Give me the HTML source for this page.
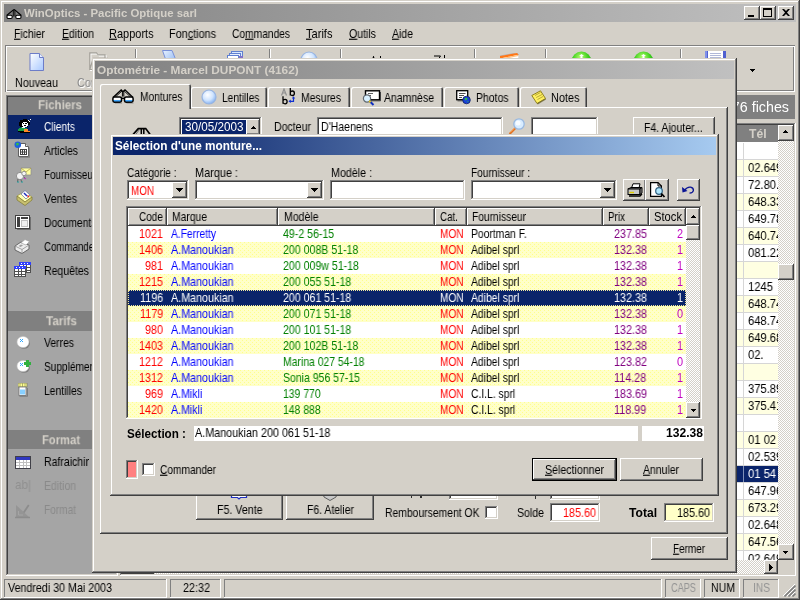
<!DOCTYPE html>
<html><head><meta charset="utf-8"><title>WinOptics</title>
<style>
html,body{margin:0;padding:0;}
body{width:800px;height:600px;overflow:hidden;background:#d4d0c8;position:relative;font-family:"Liberation Sans",sans-serif;font-size:11px;}
body div{position:absolute;box-sizing:border-box;}
.t{position:absolute;white-space:nowrap;transform-origin:0 50%;display:inline-block;will-change:transform;}
.yel{background-color:#ffffc9;background-image:radial-gradient(circle at .5px .5px,#ffff8c .55px,transparent .75px),radial-gradient(circle at 2.5px 2.5px,#ffff8c .55px,transparent .75px);background-size:4px 4px;}
.dither{background-color:#fff;background-image:linear-gradient(45deg,#d4d0c8 25%,transparent 25%,transparent 75%,#d4d0c8 75%),linear-gradient(45deg,#d4d0c8 25%,transparent 25%,transparent 75%,#d4d0c8 75%);background-size:2px 2px;background-position:0 0,1px 1px;}
svg{position:absolute;}
</style></head><body>
<div style="left:0px;top:0px;width:800px;height:600px;background:#d4d0c8;box-shadow:inset -1px -1px #404040,inset 1px 1px #d4d0c8,inset -2px -2px #808080,inset 2px 2px #fff;"></div>
<div style="left:4px;top:4px;width:792px;height:18px;background:linear-gradient(90deg,#808080 0%,#c0c0c0 100%);"></div>
<svg style="left:6px;top:9px" width="16" height="11" viewBox="0 0 16 11"><path d="M.6 6.5 L7.4 .8 M15.4 6.5 L8.8 .8 M7.4 .6 H8.8" stroke="#000" stroke-width="1.1" fill="none"/><path d="M7.3 1 V7.5 M8.9 1 V7.5" stroke="#000" stroke-width=".9"/><rect x="1" y="6.3" width="5.2" height="3.2" rx="1.2" fill="#fff" stroke="#000" stroke-width="1.1"/><rect x="9.8" y="6.3" width="5.2" height="3.2" rx="1.2" fill="#fff" stroke="#000" stroke-width="1.1"/></svg>
<span class="t" style="left:24.00px;top:4.70px;font-size:11px;line-height:16px;color:#d4d0c8;font-weight:bold;transform:scale(1.0374,1.02);">WinOptics - Pacific Optique sarl</span>
<div style="left:744px;top:6px;width:16px;height:14px;background:#d4d0c8;box-shadow:inset -1px -1px #404040,inset 1px 1px #fff,inset -2px -2px #808080,inset 2px 2px #d4d0c8;"></div>
<div style="left:760px;top:6px;width:16px;height:14px;background:#d4d0c8;box-shadow:inset -1px -1px #404040,inset 1px 1px #fff,inset -2px -2px #808080,inset 2px 2px #d4d0c8;"></div>
<div style="left:778px;top:6px;width:16px;height:14px;background:#d4d0c8;box-shadow:inset -1px -1px #404040,inset 1px 1px #fff,inset -2px -2px #808080,inset 2px 2px #d4d0c8;"></div>
<div style="left:748px;top:15px;width:6px;height:2px;background:#000;"></div>
<div style="left:763px;top:8px;width:9px;height:9px;border:1px solid #000;border-top-width:2px;"></div>
<svg style="left:782px;top:9px" width="8" height="7" viewBox="0 0 8 7"><path d="M0 0h2l2 2 2-2h2L5 3.5 8 7H6L4 5 2 7H0l3-3.5z" fill="#000"/></svg>
<span class="t" style="left:14px;top:25.2px;font-size:11px;line-height:16px;transform:scale(0.9393,1.13)"><u>F</u>ichier</span>
<span class="t" style="left:61.5px;top:25.2px;font-size:11px;line-height:16px;transform:scale(0.9515,1.13)"><u>E</u>dition</span>
<span class="t" style="left:109px;top:25.2px;font-size:11px;line-height:16px;transform:scale(0.9971,1.13)"><u>R</u>apports</span>
<span class="t" style="left:169px;top:25.2px;font-size:11px;line-height:16px;transform:scale(0.9856,1.13)">Fon<u>c</u>tions</span>
<span class="t" style="left:231.5px;top:25.2px;font-size:11px;line-height:16px;transform:scale(0.9302,1.13)">Co<u>m</u>mandes</span>
<span class="t" style="left:306px;top:25.2px;font-size:11px;line-height:16px;transform:scale(1.0084,1.13)"><u>T</u>arifs</span>
<span class="t" style="left:348.5px;top:25.2px;font-size:11px;line-height:16px;transform:scale(0.9603,1.13)"><u>O</u>utils</span>
<span class="t" style="left:391.5px;top:25.2px;font-size:11px;line-height:16px;transform:scale(0.9539,1.13)"><u>A</u>ide</span>
<div style="left:5px;top:45px;width:790px;height:47px;box-shadow:inset 1px 1px #808080,inset -1px -1px #fff,inset 2px 2px #fff,inset -2px -2px #808080;"></div>
<div style="left:135px;top:49px;width:1px;height:38px;background:#808080;"></div>
<div style="left:136px;top:49px;width:1px;height:38px;background:#fff;"></div>
<div style="left:269px;top:49px;width:1px;height:38px;background:#808080;"></div>
<div style="left:270px;top:49px;width:1px;height:38px;background:#fff;"></div>
<div style="left:340px;top:49px;width:1px;height:38px;background:#808080;"></div>
<div style="left:341px;top:49px;width:1px;height:38px;background:#fff;"></div>
<div style="left:474px;top:49px;width:1px;height:38px;background:#808080;"></div>
<div style="left:475px;top:49px;width:1px;height:38px;background:#fff;"></div>
<div style="left:545px;top:49px;width:1px;height:38px;background:#808080;"></div>
<div style="left:546px;top:49px;width:1px;height:38px;background:#fff;"></div>
<div style="left:680px;top:49px;width:1px;height:38px;background:#808080;"></div>
<div style="left:681px;top:49px;width:1px;height:38px;background:#fff;"></div>
<svg style="left:28.5px;top:52.5px" width="16" height="18" viewBox="0 0 16 18"><defs><linearGradient id="dn" x1="0" y1="0" x2="1" y2="1"><stop offset="0" stop-color="#fff"/><stop offset="1" stop-color="#a8c8ff"/></linearGradient></defs><path d="M1 .5 H10.5 L14.5 4.5 V17.5 H1 Z" fill="url(#dn)" stroke="#6c7cc8" stroke-width="1"/><path d="M10.5 .5 V4.5 H14.5" fill="#e8f0ff" stroke="#6c7cc8" stroke-width="1"/></svg>
<svg style="left:89px;top:51.5px" width="20" height="20" viewBox="0 0 20 20"><g transform="translate(1,1)"><path d="M.8 17.5 V.8 H7.5 L9.3 2.8 H16 V6.3 M.8 17.5 L4.2 6.3 H18.2 L15 17.5 Z" fill="none" stroke="#fff" stroke-width="1.2"/></g><path d="M.8 17.5 L4.2 6.3 H18.2 L15 17.5 Z" fill="#dcd9d2"/><path d="M.8 17.5 V.8 H7.5 L9.3 2.8 H16 V6.3 M.8 17.5 L4.2 6.3 H18.2 L15 17.5 Z" fill="none" stroke="#a4a19a" stroke-width="1.2"/></svg>
<svg style="left:162px;top:50px" width="14" height="17" viewBox="0 0 14 17"><defs><linearGradient id="ds" x1="0" y1="0" x2="1" y2="1"><stop offset="0" stop-color="#e8f2ff"/><stop offset="1" stop-color="#88b0f0"/></linearGradient></defs><path d="M.5 .5 H10 L13.5 9 V16 H3.5 V9 Z" fill="url(#ds)" stroke="#7890d8" stroke-width="1"/></svg>
<svg style="left:227px;top:51px" width="17" height="17" viewBox="0 0 17 17"><rect x="4.5" y=".5" width="11" height="11" fill="#d8e8ff" stroke="#6080d0"/><rect x="2.5" y="2.5" width="11" height="11" fill="#e8f0ff" stroke="#6080d0"/><rect x=".5" y="4.5" width="11" height="11" fill="#fff" stroke="#6080d0"/><rect x="12" y="5" width="4" height="10" fill="#8070c8"/></svg>
<svg style="left:299.5px;top:51px" width="18" height="18" viewBox="0 0 18 18"><defs><radialGradient id="tl" cx=".4" cy=".35" r=".7"><stop offset="0" stop-color="#fff"/><stop offset=".55" stop-color="#cfe4ff"/><stop offset="1" stop-color="#7cacf0"/></radialGradient></defs><circle cx="9" cy="9" r="8" fill="url(#tl)" stroke="#98b4e0" stroke-width="1.2"/></svg>
<svg style="left:370px;top:55.5px" width="14" height="14" viewBox="0 0 14 14"><path d="M0 11 L3.5 1 L7 11 M1.5 7.5 H5.5" stroke="#000" stroke-width="1.2" fill="none"/><path d="M10.5 0 V12 M8 9 L10.5 13 L13 9" stroke="#000" stroke-width="1" fill="none"/></svg>
<svg style="left:433.5px;top:54.5px" width="14" height="14" viewBox="0 0 14 14"><path d="M0 1 H6.5 L0 11 H6.5" stroke="#000" stroke-width="1" fill="none"/><path d="M10.5 0 V12 M8 9 L10.5 13 L13 9" stroke="#000" stroke-width="1" fill="none"/></svg>
<svg style="left:499.5px;top:53px" width="19" height="17" viewBox="0 0 19 17"><path d="M0 3 L17 0 L19 2 V16 H0 Z" fill="#fff" stroke="#a0a8b8" stroke-width=".8"/><path d="M0 3 L17 0 L18.5 1.8 L0 5.5 Z" fill="#ff7818"/><path d="M0 5.5 L18.5 1.8 L18.5 3 L0 6.8 Z" fill="#ffc080"/></svg>
<svg style="left:570.5px;top:50.5px" width="21" height="21" viewBox="0 0 21 21"><defs><radialGradient id="g1" cx=".45" cy=".3" r=".75"><stop offset="0" stop-color="#b8ff70"/><stop offset=".5" stop-color="#40d020"/><stop offset="1" stop-color="#109010"/></radialGradient></defs><circle cx="10.5" cy="10.5" r="10" fill="url(#g1)"/><path d="M9.5 4 H11.5 V12 H9.5 Z M8 5 L10.5 3 L13 5 Z" fill="#fff"/></svg>
<svg style="left:632.5px;top:50.5px" width="21" height="21" viewBox="0 0 21 21"><defs><radialGradient id="g2" cx=".45" cy=".3" r=".75"><stop offset="0" stop-color="#b8ff70"/><stop offset=".5" stop-color="#40d020"/><stop offset="1" stop-color="#109010"/></radialGradient></defs><circle cx="10.5" cy="10.5" r="10" fill="url(#g2)"/><path d="M9.5 4 H11.5 V12 H9.5 Z M8 5 L10.5 3 L13 5 Z" fill="#fff"/></svg>
<svg style="left:705px;top:50.5px" width="21" height="18" viewBox="0 0 21 18" shape-rendering="crispEdges"><rect x="0" y="0" width="21" height="18" fill="#5060d0"/><rect x="3" y="0" width="15" height="9" fill="#fff"/><path d="M5 2.5 H16 M5 4.5 H16 M5 6.5 H16" stroke="#b0b8d8" stroke-width="1"/><rect x="0" y="0" width="2" height="18" fill="#8090e8"/></svg>
<span class="t" style="left:15.00px;top:73.70px;font-size:11px;line-height:16px;color:#000;transform:scale(0.9766,1.13);">Nouveau</span>
<span class="t" style="left:77.00px;top:73.70px;font-size:11px;line-height:16px;color:#8a8a8a;transform:scale(0.9772,1.13);text-shadow:1px 1px 0 #fff;">Consulter</span>
<div style="left:750px;top:69px;width:5px;height:1px;background:#000;"></div>
<div style="left:751px;top:70px;width:3px;height:1px;background:#000;"></div>
<div style="left:752px;top:71px;width:1px;height:1px;background:#000;"></div>
<div style="left:6px;top:95px;width:112px;height:481px;background:#a5a5a5;box-shadow:inset -1px -1px #fff,inset 1px 1px #808080,inset -2px -2px #d4d0c8,inset 2px 2px #404040;"></div>
<div style="left:8px;top:97px;width:108px;height:18px;background:#808080;"></div>
<span class="t" style="left:38.00px;top:97.20px;font-size:12px;line-height:16px;color:#d4d0c8;font-weight:bold;transform:scale(0.9562,1.1);">Fichiers</span>
<div style="left:8px;top:115px;width:108px;height:24px;background:#0a246a;"></div>
<span class="t" style="left:44.00px;top:118.20px;font-size:11px;line-height:16px;color:#fff;transform:scale(0.9220,1.13);">Clients</span>
<span class="t" style="left:44.00px;top:142.20px;font-size:11px;line-height:16px;color:#000;transform:scale(0.9428,1.13);">Articles</span>
<span class="t" style="left:44.00px;top:166.20px;font-size:11px;line-height:16px;color:#000;transform:scale(0.8966,1.13);">Fournisseurs</span>
<span class="t" style="left:44.00px;top:190.20px;font-size:11px;line-height:16px;color:#000;transform:scale(0.9810,1.13);">Ventes</span>
<span class="t" style="left:44.00px;top:214.20px;font-size:11px;line-height:16px;color:#000;transform:scale(0.9437,1.13);">Documents</span>
<span class="t" style="left:44.00px;top:238.20px;font-size:11px;line-height:16px;color:#000;transform:scale(0.8821,1.13);">Commandes</span>
<span class="t" style="left:44.00px;top:262.20px;font-size:11px;line-height:16px;color:#000;transform:scale(0.9557,1.13);">Requêtes</span>
<svg style="left:17px;top:119px" width="15" height="15" viewBox="0 0 15 15" shape-rendering="crispEdges"><path d="M3 1 H6 V0 H10 V1 H12 V3 H13 V6 H11 V8 H3 V7 H2 V3 H3 Z" fill="#000"/><path d="M6 3 H10 V4 H11 V7 H10 V8 H6 V7 H5 V4 H6 Z" fill="#fff"/><path d="M6 4 H7 V5 H6 Z M8 4 H10 V5 H8 Z M7 6 H9 V7 H7 Z" fill="#000"/><path d="M11 1 H12 V2 H13 V3 H12 V2 H11 Z M13 0 H14 V1 H13 Z" fill="#fff"/><path d="M2 9 H4 V8 H8 V9 H10 V12 H1 V10 H2 Z" fill="#18a048"/><path d="M7 10 H11 V12 H13 V13 H7 Z" fill="#ff8828"/><path d="M1 12 H7 V13 H1 Z M10 13 H13 V14 H3 V13 Z" fill="#000"/><path d="M5 8 H8 V9 H5 Z" fill="#fff"/></svg>
<svg style="left:14px;top:141px" width="17" height="17" viewBox="0 0 17 17"><path d="M4.5 2.5 H11.5 L14.5 5.5 V15.5 H4.5 Z" fill="#fff" stroke="#606060"/><path d="M11.5 2.5 V5.5 H14.5" fill="#e0e0e0" stroke="#606060"/><rect x="6.5" y="8.5" width="6" height="5" fill="#fff" stroke="#404040"/><path d="M6.5 11 H12.5 M8.5 8.5 V13.5 M10.5 8.5 V13.5" stroke="#404040" stroke-width="1"/><circle cx="3.8" cy="3.8" r="3.3" fill="#2060e0"/><path d="M2 2.5 Q4 1 5 3 Q4 5 2.5 4.5 Z" fill="#30c040"/><path d="M5.5 16.5 H15.5 V6.5" stroke="#707070" stroke-width="1" fill="none" opacity=".6"/></svg>
<svg style="left:15px;top:167px" width="17" height="16" viewBox="0 0 17 16"><path d="M6 1 L16 1 L16 8 L6 8 Z" fill="#ffffa0" stroke="#909090" stroke-width=".8"/><path d="M6 1 L11 5 L16 1" fill="none" stroke="#b0a040" stroke-width=".8"/><circle cx="5" cy="9" r="3.6" fill="#f4f4f4" stroke="#808080" stroke-width=".8"/><circle cx="9" cy="6.5" r="2.2" fill="#f4f4f4" stroke="#808080" stroke-width=".8"/><path d="M3 12 L2.5 15 M6 12.5 L6.5 15 M9 10 L10.5 12" stroke="#606060" stroke-width="1"/><path d="M2 15 H4 M6 15 H8" stroke="#20a0a0" stroke-width="1"/><path d="M9 11 L11 12" stroke="#c040c0" stroke-width="1.2"/></svg>
<svg style="left:15.5px;top:190px" width="17" height="16" viewBox="0 0 17 16"><path d="M1 6 L8 2 L16 7 L9 12 Z" fill="#ffffb0" stroke="#a09840" stroke-width=".7"/><path d="M5 4 L9 .5 L14 5 L10 9 Z" fill="#fff" stroke="#6070a0" stroke-width=".7"/><path d="M8 3 L11 6" stroke="#2030c0" stroke-width="1.5"/><path d="M11.5 5.5 L13 7" stroke="#e02020" stroke-width="1.5"/><path d="M1 6 L9 12 L16 7 L16 10 L9 15.5 L1 10 Z" fill="#c8c070" stroke="#807830" stroke-width=".7"/></svg>
<svg style="left:15px;top:215px" width="16" height="15" viewBox="0 0 16 15" shape-rendering="crispEdges"><rect x=".5" y=".5" width="14" height="13" fill="#fff" stroke="#404040"/><rect x="2" y="2" width="3" height="10" fill="#404040"/><rect x="6" y="2" width="7" height="2" fill="#404040"/><rect x="6.5" y="5.5" width="6" height="6" fill="#f0f0f0" stroke="#c0c0c0"/><path d="M1.5 14.5 H15.5 V1.5" stroke="#707070" fill="none"/></svg>
<svg style="left:14px;top:238.5px" width="17" height="16" viewBox="0 0 17 16"><path d="M1 7 L7 3 L15 6 L15 10 L8 14.5 L1 11 Z" fill="#ececec" stroke="#686868" stroke-width="1"/><path d="M1 7 L8 10.5 L15 6" fill="none" stroke="#909090" stroke-width=".8"/><path d="M8 10.5 V14.5" stroke="#909090" stroke-width=".8"/><path d="M7 4 L11 .5 L15.5 2.5 L12 6 Z" fill="#fff" stroke="#a0a0a0" stroke-width=".7"/><path d="M4.5 7 L7 5.5 L9 6.5 L6.5 8 Z" fill="#a0a0a0"/></svg>
<svg style="left:14px;top:262px" width="18" height="16" viewBox="0 0 18 16" shape-rendering="crispEdges"><rect x="5.5" y="0.5" width="11" height="10" fill="#fff" stroke="#505050"/><rect x="5" y="0" width="12" height="3" fill="#3040ff"/><path d="M7 1.5 h1 m2 0 h1 m2 0 h1" stroke="#fff" stroke-width="1"/><path d="M6 5.5 h10 M6 8 h10 M9 3 v8 M12.5 3 v8" stroke="#505050" stroke-width="1"/><rect x="0.5" y="4.5" width="11" height="10" fill="#fff" stroke="#505050"/><rect x="0" y="4" width="12" height="3" fill="#3040ff"/><path d="M2 5.5 h1 m2 0 h1 m2 0 h1" stroke="#fff" stroke-width="1"/><path d="M1 9.5 h10 M1 12 h10 M4 7 v8 M7.5 7 v8" stroke="#505050" stroke-width="1"/></svg>
<div style="left:8px;top:311px;width:108px;height:20px;background:#808080;"></div>
<span class="t" style="left:46.00px;top:313.20px;font-size:12px;line-height:16px;color:#d4d0c8;font-weight:bold;transform:scale(0.9753,1.1);">Tarifs</span>
<span class="t" style="left:44.00px;top:334.20px;font-size:11px;line-height:16px;color:#000;transform:scale(0.9437,1.13);">Verres</span>
<span class="t" style="left:44.00px;top:358.20px;font-size:11px;line-height:16px;color:#000;transform:scale(0.9190,1.13);">Suppléments</span>
<span class="t" style="left:44.00px;top:382.20px;font-size:11px;line-height:16px;color:#000;transform:scale(0.9416,1.13);">Lentilles</span>
<svg style="left:16px;top:335px" width="16" height="15" viewBox="0 0 16 15"><ellipse cx="8" cy="8.2" rx="6" ry="5.6" fill="#707070" opacity=".7"/><ellipse cx="7" cy="7" rx="6" ry="5.6" fill="#fff" stroke="#c8c8c8" stroke-width=".6"/><path d="M4 4.5 h1 m1 0 h1 M5 5.5 h1 M4 6.5 h1 m1 0 h1" stroke="#30a8ff" stroke-width="1"/></svg>
<svg style="left:16px;top:359px" width="16" height="15" viewBox="0 0 16 15"><ellipse cx="8" cy="8.2" rx="6" ry="5.6" fill="#707070" opacity=".7"/><ellipse cx="7" cy="7" rx="6" ry="5.6" fill="#fff" stroke="#c8c8c8" stroke-width=".6"/><path d="M4 4.5 h1 m1 0 h1 M5 5.5 h1 M4 6.5 h1 m1 0 h1" stroke="#30a8ff" stroke-width="1"/><path d="M10 1 h3 v2 h2 v3 h-2 v2 h-3 v-2 h-2 v-3 h2 Z" fill="#30b040"/></svg>
<svg style="left:17.5px;top:383px" width="10" height="14" viewBox="0 0 10 14"><rect x="0" y="0" width="9" height="4" fill="#ffff90" stroke="#808060" stroke-width=".8"/><path d="M2 0 V4 M4.5 0 V4 M7 0 V4" stroke="#a0a060" stroke-width=".8"/><rect x="1" y="4" width="7" height="8.5" fill="#fff" stroke="#707070" stroke-width=".8"/><rect x="2" y="6.5" width="5" height="5" fill="#60c0ff" opacity=".75"/><path d="M1.5 13.3 H9.5 V5" stroke="#606060" stroke-width=".8" fill="none" opacity=".7"/></svg>
<div style="left:8px;top:430px;width:108px;height:19px;background:#808080;"></div>
<span class="t" style="left:42.00px;top:432.20px;font-size:12px;line-height:16px;color:#d4d0c8;font-weight:bold;transform:scale(0.9344,1.1);">Format</span>
<span class="t" style="left:44.00px;top:453.20px;font-size:11px;line-height:16px;color:#000;transform:scale(0.9561,1.13);">Rafraichir</span>
<span class="t" style="left:44.00px;top:477.20px;font-size:11px;line-height:16px;color:#8a8a8a;transform:scale(0.9515,1.13);">Edition</span>
<span class="t" style="left:44.00px;top:501.20px;font-size:11px;line-height:16px;color:#8a8a8a;transform:scale(0.9186,1.13);">Format</span>
<svg style="left:15px;top:456px" width="16" height="13" viewBox="0 0 16 13" shape-rendering="crispEdges"><rect x=".5" y=".5" width="15" height="12" fill="#fff" stroke="#404048"/><rect x="1" y="1" width="14" height="2.5" fill="#3038c0"/><path d="M1 6.5 H15 M1 9.5 H15 M4.5 3.5 V12 M8 3.5 V12 M11.5 3.5 V12" stroke="#c0c0c0" stroke-width="1"/></svg>
<span class="t" style="left:15.00px;top:477.20px;font-size:13px;line-height:16px;color:#909090;transform:scale(0.8970,1.0);">ab|</span>
<svg style="left:15px;top:503px" width="16" height="16" viewBox="0 0 16 16"><path d="M1 2 L1 14 L14 14 Z" fill="#909090" opacity=".75"/><path d="M3.5 8 V12 H8" fill="none" stroke="#a5a5a5" stroke-width="1"/><path d="M8 9 L13 1.5 L14.5 2.5 L9.5 10 Z" fill="#8c8c8c"/><path d="M0 14.5 H15" stroke="#8c8c8c" stroke-width="1.4"/></svg>
<div style="left:120px;top:95px;width:675px;height:24px;background:#808080;"></div>
<span class="t" style="left:716.50px;top:98.50px;font-size:14px;line-height:16px;color:#fff;transform:scale(1.0204,1.08);">1176 fiches</span>
<div style="left:120px;top:123px;width:676px;height:453px;background:#fff;box-shadow:inset -1px -1px #fff,inset 1px 1px #808080,inset -2px -2px #d4d0c8,inset 2px 2px #404040;"></div>
<div style="left:122px;top:125px;width:656px;height:17px;background:#808080;"></div>
<span class="t" style="left:749.00px;top:126.00px;font-size:12px;line-height:16px;color:#d4d0c8;font-weight:bold;transform:scale(1.0094,1.1);">Tél</span>
<div style="left:737px;top:143px;width:41px;height:17px;background:#fff;border-bottom:1px solid #d6d6d6;overflow:hidden;"></div>
<div style="left:737px;top:160px;width:41px;height:17px;background:#ffffe2;border-bottom:1px solid #d6d6d6;overflow:hidden;"><span class="t" style="left:10.5px;top:-0.30000000000000004px;font-size:12px;line-height:16px;color:#000;transform:scale(0.935,1.0)">02.649</span></div>
<div style="left:737px;top:177px;width:41px;height:17px;background:#fff;border-bottom:1px solid #d6d6d6;overflow:hidden;"><span class="t" style="left:10.5px;top:-0.30000000000000004px;font-size:12px;line-height:16px;color:#000;transform:scale(0.935,1.0)">72.80.</span></div>
<div style="left:737px;top:194px;width:41px;height:17px;background:#ffffe2;border-bottom:1px solid #d6d6d6;overflow:hidden;"><span class="t" style="left:10.5px;top:-0.30000000000000004px;font-size:12px;line-height:16px;color:#000;transform:scale(0.935,1.0)">648.33</span></div>
<div style="left:737px;top:211px;width:41px;height:17px;background:#fff;border-bottom:1px solid #d6d6d6;overflow:hidden;"><span class="t" style="left:10.5px;top:-0.30000000000000004px;font-size:12px;line-height:16px;color:#000;transform:scale(0.935,1.0)">649.78</span></div>
<div style="left:737px;top:228px;width:41px;height:17px;background:#ffffe2;border-bottom:1px solid #d6d6d6;overflow:hidden;"><span class="t" style="left:10.5px;top:-0.30000000000000004px;font-size:12px;line-height:16px;color:#000;transform:scale(0.935,1.0)">640.74</span></div>
<div style="left:737px;top:245px;width:41px;height:17px;background:#fff;border-bottom:1px solid #d6d6d6;overflow:hidden;"><span class="t" style="left:10.5px;top:-0.30000000000000004px;font-size:12px;line-height:16px;color:#000;transform:scale(0.935,1.0)">081.22</span></div>
<div style="left:737px;top:262px;width:41px;height:17px;background:#ffffe2;border-bottom:1px solid #d6d6d6;overflow:hidden;"></div>
<div style="left:737px;top:279px;width:41px;height:17px;background:#fff;border-bottom:1px solid #d6d6d6;overflow:hidden;"><span class="t" style="left:10.5px;top:-0.30000000000000004px;font-size:12px;line-height:16px;color:#000;transform:scale(0.935,1.0)">1245</span></div>
<div style="left:737px;top:296px;width:41px;height:17px;background:#ffffe2;border-bottom:1px solid #d6d6d6;overflow:hidden;"><span class="t" style="left:10.5px;top:-0.30000000000000004px;font-size:12px;line-height:16px;color:#000;transform:scale(0.935,1.0)">648.74</span></div>
<div style="left:737px;top:313px;width:41px;height:17px;background:#fff;border-bottom:1px solid #d6d6d6;overflow:hidden;"><span class="t" style="left:10.5px;top:-0.30000000000000004px;font-size:12px;line-height:16px;color:#000;transform:scale(0.935,1.0)">648.74</span></div>
<div style="left:737px;top:330px;width:41px;height:17px;background:#ffffe2;border-bottom:1px solid #d6d6d6;overflow:hidden;"><span class="t" style="left:10.5px;top:-0.30000000000000004px;font-size:12px;line-height:16px;color:#000;transform:scale(0.935,1.0)">649.68</span></div>
<div style="left:737px;top:347px;width:41px;height:17px;background:#fff;border-bottom:1px solid #d6d6d6;overflow:hidden;"><span class="t" style="left:10.5px;top:-0.30000000000000004px;font-size:12px;line-height:16px;color:#000;transform:scale(0.935,1.0)">02.</span></div>
<div style="left:737px;top:364px;width:41px;height:17px;background:#ffffe2;border-bottom:1px solid #d6d6d6;overflow:hidden;"></div>
<div style="left:737px;top:381px;width:41px;height:17px;background:#fff;border-bottom:1px solid #d6d6d6;overflow:hidden;"><span class="t" style="left:10.5px;top:-0.30000000000000004px;font-size:12px;line-height:16px;color:#000;transform:scale(0.935,1.0)">375.89</span></div>
<div style="left:737px;top:398px;width:41px;height:17px;background:#ffffe2;border-bottom:1px solid #d6d6d6;overflow:hidden;"><span class="t" style="left:10.5px;top:-0.30000000000000004px;font-size:12px;line-height:16px;color:#000;transform:scale(0.935,1.0)">375.41</span></div>
<div style="left:737px;top:415px;width:41px;height:17px;background:#fff;border-bottom:1px solid #d6d6d6;overflow:hidden;"></div>
<div style="left:737px;top:432px;width:41px;height:17px;background:#ffffe2;border-bottom:1px solid #d6d6d6;overflow:hidden;"><span class="t" style="left:10.5px;top:-0.30000000000000004px;font-size:12px;line-height:16px;color:#000;transform:scale(0.935,1.0)">01 02</span></div>
<div style="left:737px;top:449px;width:41px;height:17px;background:#fff;border-bottom:1px solid #d6d6d6;overflow:hidden;"><span class="t" style="left:10.5px;top:-0.30000000000000004px;font-size:12px;line-height:16px;color:#000;transform:scale(0.935,1.0)">02.539</span></div>
<div style="left:737px;top:466px;width:41px;height:17px;background:#0a246a;border-bottom:1px solid #d6d6d6;overflow:hidden;"><span class="t" style="left:10.5px;top:-0.30000000000000004px;font-size:12px;line-height:16px;color:#fff;transform:scale(0.935,1.0)">01 54</span></div>
<div style="left:737px;top:483px;width:41px;height:17px;background:#fff;border-bottom:1px solid #d6d6d6;overflow:hidden;"><span class="t" style="left:10.5px;top:-0.30000000000000004px;font-size:12px;line-height:16px;color:#000;transform:scale(0.935,1.0)">647.96</span></div>
<div style="left:737px;top:500px;width:41px;height:17px;background:#ffffe2;border-bottom:1px solid #d6d6d6;overflow:hidden;"><span class="t" style="left:10.5px;top:-0.30000000000000004px;font-size:12px;line-height:16px;color:#000;transform:scale(0.935,1.0)">673.29</span></div>
<div style="left:737px;top:517px;width:41px;height:17px;background:#fff;border-bottom:1px solid #d6d6d6;overflow:hidden;"><span class="t" style="left:10.5px;top:-0.30000000000000004px;font-size:12px;line-height:16px;color:#000;transform:scale(0.935,1.0)">02.648</span></div>
<div style="left:737px;top:534px;width:41px;height:17px;background:#ffffe2;border-bottom:1px solid #d6d6d6;overflow:hidden;"><span class="t" style="left:10.5px;top:-0.30000000000000004px;font-size:12px;line-height:16px;color:#000;transform:scale(0.935,1.0)">647.56</span></div>
<div style="left:737px;top:551px;width:41px;height:9px;background:#fff;overflow:hidden;"><span class="t" style="left:10.5px;top:-0.30000000000000004px;font-size:12px;line-height:16px;color:#000;transform:scale(0.935,1.0)">02.649</span></div>
<div style="left:743px;top:143px;width:1px;height:417px;background:#d6d6d6;"></div>
<div style="left:743px;top:466px;width:1px;height:16px;background:#8090b8;"></div>
<div class="dither" style="left:778px;top:125px;width:16px;height:435px;"></div>
<div style="left:778px;top:125px;width:16px;height:16px;background:#d4d0c8;box-shadow:inset -1px -1px #404040,inset 1px 1px #fff,inset -2px -2px #808080,inset 2px 2px #d4d0c8;"></div>
<div style="left:785px;top:130px;width:1px;height:1px;background:#000;"></div>
<div style="left:784px;top:131px;width:3px;height:1px;background:#000;"></div>
<div style="left:783px;top:132px;width:5px;height:1px;background:#000;"></div>
<div style="left:778px;top:264px;width:16px;height:16px;background:#d4d0c8;box-shadow:inset -1px -1px #404040,inset 1px 1px #fff,inset -2px -2px #808080,inset 2px 2px #d4d0c8;"></div>
<div style="left:778px;top:544px;width:16px;height:16px;background:#d4d0c8;box-shadow:inset -1px -1px #404040,inset 1px 1px #fff,inset -2px -2px #808080,inset 2px 2px #d4d0c8;"></div>
<div style="left:783px;top:551px;width:5px;height:1px;background:#000;"></div>
<div style="left:784px;top:552px;width:3px;height:1px;background:#000;"></div>
<div style="left:785px;top:553px;width:1px;height:1px;background:#000;"></div>
<div class="dither" style="left:122px;top:560px;width:642px;height:14px;"></div>
<div style="left:122px;top:560px;width:16px;height:14px;background:#d4d0c8;box-shadow:inset -1px -1px #404040,inset 1px 1px #fff,inset -2px -2px #808080,inset 2px 2px #d4d0c8;"></div>
<div style="left:138px;top:560px;width:16px;height:14px;background:#d4d0c8;box-shadow:inset -1px -1px #404040,inset 1px 1px #fff,inset -2px -2px #808080,inset 2px 2px #d4d0c8;"></div>
<div style="left:764px;top:560px;width:14px;height:14px;background:#d4d0c8;box-shadow:inset -1px -1px #404040,inset 1px 1px #fff,inset -2px -2px #808080,inset 2px 2px #d4d0c8;"></div>
<div style="left:769px;top:564px;width:1px;height:7px;background:#000;"></div>
<div style="left:770px;top:565px;width:1px;height:5px;background:#000;"></div>
<div style="left:771px;top:566px;width:1px;height:3px;background:#000;"></div>
<div style="left:772px;top:567px;width:1px;height:1px;background:#000;"></div>
<div style="left:778px;top:560px;width:16px;height:14px;background:#d4d0c8;"></div>
<div style="left:4px;top:579px;width:163px;height:19px;box-shadow:inset -1px -1px #fff,inset 1px 1px #808080;"></div>
<div style="left:170px;top:579px;width:51px;height:19px;box-shadow:inset -1px -1px #fff,inset 1px 1px #808080;"></div>
<div style="left:224px;top:579px;width:438px;height:19px;box-shadow:inset -1px -1px #fff,inset 1px 1px #808080;"></div>
<div style="left:665px;top:579px;width:36px;height:19px;box-shadow:inset -1px -1px #fff,inset 1px 1px #808080;"></div>
<div style="left:704px;top:579px;width:36px;height:19px;box-shadow:inset -1px -1px #fff,inset 1px 1px #808080;"></div>
<div style="left:743px;top:579px;width:36px;height:19px;box-shadow:inset -1px -1px #fff,inset 1px 1px #808080;"></div>
<span class="t" style="left:8.00px;top:579.20px;font-size:11px;line-height:16px;color:#000;transform:scale(0.9718,1.13);">Vendredi 30 Mai 2003</span>
<span class="t" style="left:182.50px;top:579.20px;font-size:11px;line-height:16px;color:#000;transform:scale(0.9810,1.13);">22:32</span>
<span class="t" style="left:671.00px;top:579.20px;font-size:11px;line-height:16px;color:#949494;transform:scale(0.8346,1.13);">CAPS</span>
<span class="t" style="left:711.00px;top:579.20px;font-size:11px;line-height:16px;color:#000;transform:scale(0.9581,1.13);">NUM</span>
<span class="t" style="left:753.00px;top:579.20px;font-size:11px;line-height:16px;color:#949494;transform:scale(0.9271,1.13);">INS</span>
<svg style="left:783px;top:584px" width="13" height="13" viewBox="0 0 13 13"><path d="M12.5 1.5L1.5 12.5M12.5 5.5L5.5 12.5M12.5 9.5L9.5 12.5" stroke="#808080" stroke-width="1.6"/><path d="M12 0L0 12M12 4L4 12M12 8L8 12" stroke="#fff" stroke-width="1"/></svg>
<div style="left:92px;top:58px;width:645px;height:515px;background:#d4d0c8;box-shadow:inset -1px -1px #404040,inset 1px 1px #d4d0c8,inset -2px -2px #808080,inset 2px 2px #fff;"></div>
<div style="left:95px;top:61px;width:639px;height:18px;background:linear-gradient(90deg,#808080 0%,#c0c0c0 100%);"></div>
<span class="t" style="left:97.30px;top:61.50px;font-size:11px;line-height:16px;color:#d4d0c8;font-weight:bold;transform:scale(1.0749,1.02);">Optométrie - Marcel DUPONT (4162)</span>
<div style="left:100px;top:107px;width:628px;height:427px;background:#d4d0c8;box-shadow:inset -1px -1px #404040,inset 1px 1px #fff,inset -2px -2px #808080;"></div>
<div style="left:191px;top:87px;width:76px;height:20px;background:#d4d0c8;border-radius:2px 2px 0 0;box-shadow:inset 1px 1px #fff,inset -1px 0 #404040,inset -2px 0 #808080;"></div>
<span class="t" style="left:221.50px;top:88.70px;font-size:11px;line-height:16px;color:#000;transform:scale(0.9292,1.13);">Lentilles</span>
<div style="left:268px;top:87px;width:82px;height:20px;background:#d4d0c8;border-radius:2px 2px 0 0;box-shadow:inset 1px 1px #fff,inset -1px 0 #404040,inset -2px 0 #808080;"></div>
<span class="t" style="left:301.00px;top:88.70px;font-size:11px;line-height:16px;color:#000;transform:scale(0.9484,1.13);">Mesures</span>
<div style="left:351px;top:87px;width:92px;height:20px;background:#d4d0c8;border-radius:2px 2px 0 0;box-shadow:inset 1px 1px #fff,inset -1px 0 #404040,inset -2px 0 #808080;"></div>
<span class="t" style="left:384.00px;top:88.70px;font-size:11px;line-height:16px;color:#000;transform:scale(0.9508,1.13);">Anamnèse</span>
<div style="left:444px;top:87px;width:75px;height:20px;background:#d4d0c8;border-radius:2px 2px 0 0;box-shadow:inset 1px 1px #fff,inset -1px 0 #404040,inset -2px 0 #808080;"></div>
<span class="t" style="left:475.50px;top:88.70px;font-size:11px;line-height:16px;color:#000;transform:scale(0.9491,1.13);">Photos</span>
<div style="left:520px;top:87px;width:67px;height:20px;background:#d4d0c8;border-radius:2px 2px 0 0;box-shadow:inset 1px 1px #fff,inset -1px 0 #404040,inset -2px 0 #808080;"></div>
<span class="t" style="left:551.00px;top:88.70px;font-size:11px;line-height:16px;color:#000;transform:scale(0.9919,1.13);">Notes</span>
<div style="left:100px;top:84px;width:91px;height:25px;background:#d4d0c8;border-radius:2px 2px 0 0;box-shadow:inset 1px 1px #fff,inset -1px 0 #404040,inset -2px 0 #808080;"></div>
<div style="left:101px;top:107px;width:88px;height:2px;background:#d4d0c8;"></div>
<span class="t" style="left:140.00px;top:88.00px;font-size:11px;line-height:16px;color:#000;transform:scale(0.9269,1.13);">Montures</span>
<svg style="left:112px;top:88.5px" width="22" height="15" viewBox="0 0 22 15"><defs><linearGradient id="gl" x1="0" y1="0" x2="0" y2="1"><stop offset="0.5" stop-color="#fff"/><stop offset=".55" stop-color="#40a8ff"/><stop offset="1" stop-color="#40a8ff"/></linearGradient></defs><path d="M1 8.5 L9.2 .9 L11 2.6 M21 8.5 L13 .9 L11 2.6" stroke="#000" stroke-width="1.3" fill="none"/><path d="M3.3 8 L10 2 M18.6 8 L12.2 2" stroke="#000" stroke-width=".9" fill="none"/><path d="M10.4 2 V7.6 M11.8 2 V7.6" stroke="#000" stroke-width="1"/><rect x=".9" y="8" width="8.6" height="5.2" rx="1.6" fill="url(#gl)" stroke="#000" stroke-width="1.5"/><rect x="12.5" y="8" width="8.6" height="5.2" rx="1.6" fill="url(#gl)" stroke="#000" stroke-width="1.5"/><path d="M9.5 9.3 H12.5" stroke="#000" stroke-width="1.4"/><path d="M3 14.3 H10 M14.5 14.3 H21.5" stroke="#808080" stroke-width="1" opacity=".55"/></svg>
<svg style="left:200.5px;top:89px" width="16" height="16" viewBox="0 0 16 16"><defs><radialGradient id="tl2" cx=".4" cy=".35" r=".7"><stop offset="0" stop-color="#fff"/><stop offset=".55" stop-color="#cfe4ff"/><stop offset="1" stop-color="#7cacf0"/></radialGradient></defs><circle cx="8" cy="8" r="7" fill="url(#tl2)" stroke="#98b4e0" stroke-width="1.2"/></svg>
<svg style="left:281px;top:88px" width="16" height="17" viewBox="0 0 16 17"><path d="M.5 7.5 L3 1 L5.5 7.5 M1.5 5 H4.5" stroke="#909090" stroke-width="1.2" fill="none"/><g transform="translate(8.5,0)"><path d="M.8 0 V7.5 M.8 4.6 Q.9 3 2.9 3 Q4.9 3 4.9 5.3 Q4.9 7.5 2.9 7.5 Q.9 7.5 .8 6" stroke="#000" stroke-width="1.3" fill="none"/></g><g transform="translate(1.2,8.3)"><path d="M.8 0 V7.5 M.8 4.6 Q.9 3 2.9 3 Q4.9 3 4.9 5.3 Q4.9 7.5 2.9 7.5 Q.9 7.5 .8 6" stroke="#000" stroke-width="1.3" fill="none"/></g><path d="M12.5 9.5 V13.3 H9" stroke="#1030d0" stroke-width="1.2" fill="none"/><path d="M10.8 10.6 L12.5 8.2 L14.2 10.6 Z M9.8 11.6 L7.4 13.3 L9.8 15 Z" fill="#1030d0"/></svg>
<svg style="left:362px;top:89.5px" width="19" height="16" viewBox="0 0 19 16"><rect x="3.5" y=".8" width="14" height="9" fill="#fff" stroke="#000" stroke-width="1.4"/><path d="M6 3.5 H11 M6 5.5 H9" stroke="#606060" stroke-width="1"/><path d="M4.5 10.8 H18.5 V2" stroke="#404040" stroke-width="1" fill="none"/><circle cx="5" cy="8.5" r="3.6" fill="#d8f0ff" stroke="#606870" stroke-width="1.2"/><path d="M7.5 11 L11.5 15" stroke="#1030c0" stroke-width="2"/><path d="M7.2 10.8 L8.6 12.2" stroke="#e0c020" stroke-width="2"/></svg>
<svg style="left:456px;top:90px" width="15" height="15" viewBox="0 0 15 15"><rect x=".7" y=".7" width="11" height="9" fill="#fff" stroke="#000" stroke-width="1.3"/><path d="M3 3.5 H9.5 M3 5.5 H8 M3 7.5 H6" stroke="#505050" stroke-width="1"/><path d="M1.5 10.8 H7" stroke="#404040"/><circle cx="10.5" cy="10" r="3.8" fill="#1840d8" stroke="#102060" stroke-width=".8"/><path d="M8.5 8.5 Q10 7 11.5 8.5 Q11 10.5 9.5 10.5 Z M11 11.5 l1.5 -.5 l-.5 1.5 Z" fill="#30c040"/></svg>
<svg style="left:531px;top:89.5px" width="16" height="15" viewBox="0 0 16 15"><path d="M.8 5.5 L9.5 .8 L14.5 8.5 L6 13.5 Z" fill="#fff060" stroke="#908020" stroke-width="1"/><path d="M4 5.5 L9.5 2.5 M5.2 7.5 L11 4.5 M6.5 9.5 L12 6.5" stroke="#b0a030" stroke-width=".9"/><path d="M6 13.5 L14.5 8.5 L15 9.5 L6.8 14.5 Z" fill="#605820" opacity=".7"/></svg>
<svg style="left:131.5px;top:127px" width="19" height="8" viewBox="0 0 19 8"><path d="M.8 7.8 L6.3 1.6 H13.7 L18.4 7.8" fill="none" stroke="#000" stroke-width="1.7"/><path d="M3.5 7.8 L7.5 2.5" stroke="#707070" stroke-width="1"/><path d="M9.3 1.5 V8 M11.8 1.5 V8" stroke="#000" stroke-width="1.5"/></svg>
<div style="left:179px;top:117px;width:83px;height:20px;background:#fff;box-shadow:inset -1px -1px #fff,inset 1px 1px #808080,inset -2px -2px #d4d0c8,inset 2px 2px #404040;"></div>
<div style="left:182px;top:120px;width:64px;height:15px;background:#0a246a;"></div>
<span class="t" style="left:184.50px;top:118.20px;font-size:11px;line-height:16px;color:#fff;transform:scale(1.0627,1.13);">30/05/2003</span>
<div style="left:246px;top:119px;width:14px;height:16px;background:#d4d0c8;box-shadow:inset -1px -1px #404040,inset 1px 1px #fff,inset -2px -2px #808080,inset 2px 2px #d4d0c8;"></div>
<div style="left:253px;top:126px;width:1px;height:1px;background:#000;"></div>
<div style="left:252px;top:127px;width:3px;height:1px;background:#000;"></div>
<div style="left:251px;top:128px;width:5px;height:1px;background:#000;"></div>
<span class="t" style="left:274.00px;top:118.20px;font-size:11px;line-height:16px;color:#000;transform:scale(0.9607,1.13);">Docteur</span>
<div style="left:317px;top:117px;width:186px;height:20px;background:#fff;box-shadow:inset -1px -1px #fff,inset 1px 1px #808080,inset -2px -2px #d4d0c8,inset 2px 2px #404040;"></div>
<span class="t" style="left:321.00px;top:118.20px;font-size:11px;line-height:16px;color:#000;transform:scale(0.9617,1.13);">D'Haenens</span>
<svg style="left:508px;top:117.5px" width="17" height="17" viewBox="0 0 17 17"><path d="M7.5 10 L1.5 16" stroke="#e07020" stroke-width="2.2"/><path d="M7 9.5 L2 14.5" stroke="#ffc080" stroke-width=".8"/><circle cx="11" cy="6" r="5.2" fill="#d8ecff" stroke="#98b8e0" stroke-width="1.3"/><circle cx="10" cy="5" r="2.5" fill="#fff" opacity=".8"/></svg>
<div style="left:531px;top:117px;width:67px;height:20px;background:#fff;box-shadow:inset -1px -1px #fff,inset 1px 1px #808080,inset -2px -2px #d4d0c8,inset 2px 2px #404040;"></div>
<div style="left:633px;top:117px;width:82px;height:22px;background:#d4d0c8;box-shadow:inset -1px -1px #404040,inset 1px 1px #fff,inset -2px -2px #808080,inset 2px 2px #d4d0c8;"></div>
<span class="t" style="left:644.30px;top:119.20px;font-size:11px;line-height:16px;color:#000;transform:scale(0.9506,1.13);">F4. Ajouter...</span>
<div style="left:196px;top:490px;width:87px;height:30px;background:#d4d0c8;box-shadow:inset -1px -1px #404040,inset 1px 1px #fff,inset -2px -2px #808080,inset 2px 2px #d4d0c8;"></div>
<svg style="left:230px;top:488px" width="18" height="12" viewBox="0 0 18 12"><path d="M1.5 0 V9.5 H7.5 L9 11 L10.5 9.5 H16.5 V0" fill="#fff" stroke="#2030c0" stroke-width="1.2"/></svg>
<span class="t" style="left:216.50px;top:500.80px;font-size:11px;line-height:16px;color:#000;transform:scale(0.9663,1.13);">F5. Vente</span>
<div style="left:286px;top:490px;width:88px;height:30px;background:#d4d0c8;box-shadow:inset -1px -1px #404040,inset 1px 1px #fff,inset -2px -2px #808080,inset 2px 2px #d4d0c8;"></div>
<svg style="left:321px;top:490px" width="18" height="11" viewBox="0 0 18 11"><path d="M1 0 H17 L15 7 L9 10.5 L3 7 Z" fill="#c8c8c8" stroke="#606060"/></svg>
<span class="t" style="left:307.00px;top:500.80px;font-size:11px;line-height:16px;color:#000;transform:scale(0.9491,1.13);">F6. Atelier</span>
<span class="t" style="left:384.50px;top:504.00px;font-size:11px;line-height:16px;color:#000;transform:scale(0.9426,1.13);">Remboursement OK</span>
<div style="left:485px;top:506px;width:13px;height:13px;background:#fff;box-shadow:inset -1px -1px #fff,inset 1px 1px #808080,inset -2px -2px #d4d0c8,inset 2px 2px #404040;"></div>
<div style="left:449px;top:480px;width:49px;height:20px;background:#fff;box-shadow:inset -1px -1px #fff,inset 1px 1px #808080,inset -2px -2px #d4d0c8,inset 2px 2px #404040;"></div>
<div style="left:550px;top:480px;width:50px;height:20px;background:#fff;box-shadow:inset -1px -1px #fff,inset 1px 1px #808080,inset -2px -2px #d4d0c8,inset 2px 2px #404040;"></div>
<div style="left:411px;top:496px;width:1px;height:2px;background:#303030;"></div>
<div style="left:420px;top:496px;width:2px;height:2px;background:#303030;"></div>
<div style="left:535px;top:496px;width:1px;height:3px;background:#303030;"></div>
<span class="t" style="left:517.00px;top:504.00px;font-size:11px;line-height:16px;color:#000;transform:scale(0.9597,1.13);">Solde</span>
<div style="left:550px;top:503px;width:50px;height:19px;background:#fff;box-shadow:inset -1px -1px #fff,inset 1px 1px #808080,inset -2px -2px #d4d0c8,inset 2px 2px #404040;"></div>
<span class="t" style="left:563.00px;top:504.00px;font-size:11px;line-height:16px;color:#ff0000;transform:scale(0.9809,1.13);">185.60</span>
<span class="t" style="left:629.00px;top:504.00px;font-size:11px;line-height:16px;color:#000;font-weight:bold;transform:scale(1.0999,1.13);">Total</span>
<div style="left:664px;top:503px;width:50px;height:19px;background:#ffffc8;box-shadow:inset -1px -1px #fff,inset 1px 1px #808080,inset -2px -2px #d4d0c8,inset 2px 2px #404040;"></div>
<span class="t" style="left:677.00px;top:504.00px;font-size:11px;line-height:16px;color:#000;transform:scale(0.9809,1.13);">185.60</span>
<div style="left:651px;top:537px;width:77px;height:23px;background:#d4d0c8;box-shadow:inset -1px -1px #404040,inset 1px 1px #fff,inset -2px -2px #808080,inset 2px 2px #d4d0c8;"></div>
<span class="t" style="left:673.00px;top:540.00px;font-size:11px;line-height:16px;color:#000;transform:scale(0.9029,1.13);"><u>F</u>ermer</span>
<div style="left:110px;top:134px;width:609px;height:362px;background:#d4d0c8;box-shadow:inset -1px -1px #404040,inset 1px 1px #d4d0c8,inset -2px -2px #808080,inset 2px 2px #fff;"></div>
<div style="left:113px;top:137px;width:603px;height:18px;background:linear-gradient(90deg,#0a246a 0%,#0a246a 6%,#a6caf0 100%);"></div>
<span class="t" style="left:115.00px;top:137.50px;font-size:11px;line-height:16px;color:#fff;font-weight:bold;transform:scale(1.0725,1.1);">Sélection d'une monture...</span>
<span class="t" style="left:127.00px;top:164.00px;font-size:11px;line-height:16px;color:#000;transform:scale(0.9200,1.13);">Catégorie :</span>
<span class="t" style="left:195.00px;top:164.00px;font-size:11px;line-height:16px;color:#000;transform:scale(0.9907,1.13);">Marque :</span>
<span class="t" style="left:331.00px;top:164.00px;font-size:11px;line-height:16px;color:#000;transform:scale(0.9719,1.13);">Modèle :</span>
<span class="t" style="left:471.00px;top:164.00px;font-size:11px;line-height:16px;color:#000;transform:scale(0.9192,1.13);">Fournisseur :</span>
<div style="left:127px;top:180px;width:62px;height:20px;background:#fff;box-shadow:inset -1px -1px #fff,inset 1px 1px #808080,inset -2px -2px #d4d0c8,inset 2px 2px #404040;"></div>
<span class="t" style="left:131.00px;top:181.50px;font-size:11px;line-height:16px;color:#ff0000;transform:scale(0.8962,1.13);">MON</span>
<div style="left:172px;top:182px;width:15px;height:16px;background:#d4d0c8;box-shadow:inset -1px -1px #404040,inset 1px 1px #fff,inset -2px -2px #808080,inset 2px 2px #d4d0c8;"></div>
<div style="left:176px;top:188px;width:7px;height:1px;background:#000;"></div>
<div style="left:177px;top:189px;width:5px;height:1px;background:#000;"></div>
<div style="left:178px;top:190px;width:3px;height:1px;background:#000;"></div>
<div style="left:179px;top:191px;width:1px;height:1px;background:#000;"></div>
<div style="left:195px;top:180px;width:129px;height:20px;background:#fff;box-shadow:inset -1px -1px #fff,inset 1px 1px #808080,inset -2px -2px #d4d0c8,inset 2px 2px #404040;"></div>
<div style="left:307px;top:182px;width:15px;height:16px;background:#d4d0c8;box-shadow:inset -1px -1px #404040,inset 1px 1px #fff,inset -2px -2px #808080,inset 2px 2px #d4d0c8;"></div>
<div style="left:311px;top:188px;width:7px;height:1px;background:#000;"></div>
<div style="left:312px;top:189px;width:5px;height:1px;background:#000;"></div>
<div style="left:313px;top:190px;width:3px;height:1px;background:#000;"></div>
<div style="left:314px;top:191px;width:1px;height:1px;background:#000;"></div>
<div style="left:330px;top:180px;width:135px;height:20px;background:#fff;box-shadow:inset -1px -1px #fff,inset 1px 1px #808080,inset -2px -2px #d4d0c8,inset 2px 2px #404040;"></div>
<div style="left:471px;top:180px;width:146px;height:20px;background:#fff;box-shadow:inset -1px -1px #fff,inset 1px 1px #808080,inset -2px -2px #d4d0c8,inset 2px 2px #404040;"></div>
<div style="left:600px;top:182px;width:15px;height:16px;background:#d4d0c8;box-shadow:inset -1px -1px #404040,inset 1px 1px #fff,inset -2px -2px #808080,inset 2px 2px #d4d0c8;"></div>
<div style="left:604px;top:188px;width:7px;height:1px;background:#000;"></div>
<div style="left:605px;top:189px;width:5px;height:1px;background:#000;"></div>
<div style="left:606px;top:190px;width:3px;height:1px;background:#000;"></div>
<div style="left:607px;top:191px;width:1px;height:1px;background:#000;"></div>
<div style="left:623px;top:179px;width:23px;height:22px;background:#d4d0c8;box-shadow:inset -1px -1px #404040,inset 1px 1px #fff,inset -2px -2px #808080,inset 2px 2px #d4d0c8;"></div>
<svg style="left:626.5px;top:183px" width="16" height="14" viewBox="0 0 16 14"><path d="M4.5 5 L6 .8 H13 L12 5 Z" fill="#fff" stroke="#000" stroke-width="1"/><path d="M1 6 L4 4.5 H15 L13 6 Z" fill="#d0d0d0" stroke="#000" stroke-width="1"/><rect x="1" y="6" width="12" height="5.5" fill="#c8c8c8" stroke="#000" stroke-width="1"/><path d="M13 6 L15 4.5 V10 L13 11.5 Z" fill="#909090" stroke="#000" stroke-width="1"/><path d="M2.5 9.5 H7" stroke="#e0d000" stroke-width="1.4"/><path d="M2 13 H13 L15 11" stroke="#000" stroke-width="1.3" fill="none"/></svg>
<div style="left:645px;top:179px;width:24px;height:22px;background:#d4d0c8;box-shadow:inset -1px -1px #404040,inset 1px 1px #fff,inset -2px -2px #808080,inset 2px 2px #d4d0c8;"></div>
<svg style="left:650px;top:182px" width="16" height="16" viewBox="0 0 16 16"><path d="M.6 .6 H8 L11.4 4 V14.4 H.6 Z" fill="#fff" stroke="#000" stroke-width="1.2"/><path d="M8 .6 V4 H11.4" fill="none" stroke="#000" stroke-width="1"/><circle cx="9" cy="9" r="3.3" fill="#b0e8ff" stroke="#306080" stroke-width="1.2"/><path d="M11.3 11.5 L14.5 15" stroke="#000" stroke-width="1.8"/></svg>
<div style="left:677px;top:179px;width:23px;height:22px;background:#d4d0c8;box-shadow:inset -1px -1px #404040,inset 1px 1px #fff,inset -2px -2px #808080,inset 2px 2px #d4d0c8;"></div>
<svg style="left:681px;top:184px" width="14" height="11" viewBox="0 0 14 11"><path d="M3.5 6.5 Q6 2.8 9.5 3.2 Q12.6 3.8 12.4 6.5 Q12 9 8.5 9.2" fill="none" stroke="#0a1494" stroke-width="1.3"/><path d="M1 3 L1.5 8.5 L6.5 7 Z" fill="#0a1494"/></svg>
<div style="left:126px;top:206px;width:576px;height:213px;background:#fff;box-shadow:inset -1px -1px #fff,inset 1px 1px #808080,inset -2px -2px #d4d0c8,inset 2px 2px #404040;"></div>
<div style="left:128px;top:208px;width:39px;height:18px;background:#d4d0c8;box-shadow:inset -1px -1px #404040,inset 1px 1px #fff,inset -2px -2px #808080,inset 2px 2px #d4d0c8;"></div>
<span class="t" style="left:138.70px;top:207.50px;font-size:11px;line-height:16px;color:#000;transform:scale(0.9051,1.13);">Code</span>
<div style="left:167px;top:208px;width:111px;height:18px;background:#d4d0c8;box-shadow:inset -1px -1px #404040,inset 1px 1px #fff,inset -2px -2px #808080,inset 2px 2px #d4d0c8;"></div>
<span class="t" style="left:172.00px;top:207.50px;font-size:11px;line-height:16px;color:#000;transform:scale(0.9385,1.13);">Marque</span>
<div style="left:278px;top:208px;width:157px;height:18px;background:#d4d0c8;box-shadow:inset -1px -1px #404040,inset 1px 1px #fff,inset -2px -2px #808080,inset 2px 2px #d4d0c8;"></div>
<span class="t" style="left:283.50px;top:207.50px;font-size:11px;line-height:16px;color:#000;transform:scale(0.9563,1.13);">Modèle</span>
<div style="left:435px;top:208px;width:32px;height:18px;background:#d4d0c8;box-shadow:inset -1px -1px #404040,inset 1px 1px #fff,inset -2px -2px #808080,inset 2px 2px #d4d0c8;"></div>
<span class="t" style="left:440.00px;top:207.50px;font-size:11px;line-height:16px;color:#000;transform:scale(0.8923,1.13);">Cat.</span>
<div style="left:467px;top:208px;width:136px;height:18px;background:#d4d0c8;box-shadow:inset -1px -1px #404040,inset 1px 1px #fff,inset -2px -2px #808080,inset 2px 2px #d4d0c8;"></div>
<span class="t" style="left:472.00px;top:207.50px;font-size:11px;line-height:16px;color:#000;transform:scale(0.9299,1.13);">Fournisseur</span>
<div style="left:603px;top:208px;width:46px;height:18px;background:#d4d0c8;box-shadow:inset -1px -1px #404040,inset 1px 1px #fff,inset -2px -2px #808080,inset 2px 2px #d4d0c8;"></div>
<span class="t" style="left:608.00px;top:207.50px;font-size:11px;line-height:16px;color:#000;transform:scale(0.8974,1.13);">Prix</span>
<div style="left:649px;top:208px;width:37px;height:18px;background:#d4d0c8;box-shadow:inset -1px -1px #404040,inset 1px 1px #fff,inset -2px -2px #808080,inset 2px 2px #d4d0c8;"></div>
<span class="t" style="left:654.00px;top:207.50px;font-size:11px;line-height:16px;color:#000;transform:scale(1.0178,1.13);">Stock</span>
<div style="left:128px;top:226px;width:558px;height:16px;background:#fff;"></div>
<span class="t" style="left:139.42px;top:224.90px;font-size:11px;line-height:16px;color:#ff0000;transform:scale(0.9800,1.13);">1021</span>
<span class="t" style="left:170.80px;top:224.90px;font-size:11px;line-height:16px;color:#0000ff;transform:scale(0.9320,1.13);">A.Ferretty</span>
<span class="t" style="left:282.70px;top:224.90px;font-size:11px;line-height:16px;color:#008000;transform:scale(0.9620,1.13);">49-2 56-15</span>
<span class="t" style="left:439.50px;top:224.90px;font-size:11px;line-height:16px;color:#ff0000;transform:scale(0.9157,1.13);">MON</span>
<span class="t" style="left:471.20px;top:224.90px;font-size:11px;line-height:16px;color:#000;transform:scale(0.9400,1.13);">Poortman F.</span>
<span class="t" style="left:613.53px;top:224.90px;font-size:11px;line-height:16px;color:#800080;transform:scale(0.9800,1.13);">237.85</span>
<span class="t" style="left:677.01px;top:224.90px;font-size:11px;line-height:16px;color:#c000c0;transform:scale(0.9800,1.13);">2</span>
<div class="yel" style="left:128px;top:242px;width:558px;height:16px;"></div>
<span class="t" style="left:139.42px;top:240.90px;font-size:11px;line-height:16px;color:#ff0000;transform:scale(0.9800,1.13);">1406</span>
<span class="t" style="left:170.80px;top:240.90px;font-size:11px;line-height:16px;color:#0000ff;transform:scale(0.9750,1.13);">A.Manoukian</span>
<span class="t" style="left:282.70px;top:240.90px;font-size:11px;line-height:16px;color:#008000;transform:scale(0.9620,1.13);">200 008B 51-18</span>
<span class="t" style="left:439.50px;top:240.90px;font-size:11px;line-height:16px;color:#ff0000;transform:scale(0.9157,1.13);">MON</span>
<span class="t" style="left:471.20px;top:240.90px;font-size:11px;line-height:16px;color:#000;transform:scale(0.9400,1.13);">Adibel sprl</span>
<span class="t" style="left:613.53px;top:240.90px;font-size:11px;line-height:16px;color:#800080;transform:scale(0.9800,1.13);">132.38</span>
<span class="t" style="left:677.01px;top:240.90px;font-size:11px;line-height:16px;color:#c000c0;transform:scale(0.9800,1.13);">1</span>
<div style="left:128px;top:258px;width:558px;height:16px;background:#fff;"></div>
<span class="t" style="left:145.42px;top:256.90px;font-size:11px;line-height:16px;color:#ff0000;transform:scale(0.9800,1.13);">981</span>
<span class="t" style="left:170.80px;top:256.90px;font-size:11px;line-height:16px;color:#0000ff;transform:scale(0.9750,1.13);">A.Manoukian</span>
<span class="t" style="left:282.70px;top:256.90px;font-size:11px;line-height:16px;color:#008000;transform:scale(0.9620,1.13);">200 009w 51-18</span>
<span class="t" style="left:439.50px;top:256.90px;font-size:11px;line-height:16px;color:#ff0000;transform:scale(0.9157,1.13);">MON</span>
<span class="t" style="left:471.20px;top:256.90px;font-size:11px;line-height:16px;color:#000;transform:scale(0.9400,1.13);">Adibel sprl</span>
<span class="t" style="left:613.53px;top:256.90px;font-size:11px;line-height:16px;color:#800080;transform:scale(0.9800,1.13);">132.38</span>
<span class="t" style="left:677.01px;top:256.90px;font-size:11px;line-height:16px;color:#c000c0;transform:scale(0.9800,1.13);">1</span>
<div class="yel" style="left:128px;top:274px;width:558px;height:16px;"></div>
<span class="t" style="left:139.42px;top:272.90px;font-size:11px;line-height:16px;color:#ff0000;transform:scale(0.9800,1.13);">1215</span>
<span class="t" style="left:170.80px;top:272.90px;font-size:11px;line-height:16px;color:#0000ff;transform:scale(0.9750,1.13);">A.Manoukian</span>
<span class="t" style="left:282.70px;top:272.90px;font-size:11px;line-height:16px;color:#008000;transform:scale(0.9620,1.13);">200 055 51-18</span>
<span class="t" style="left:439.50px;top:272.90px;font-size:11px;line-height:16px;color:#ff0000;transform:scale(0.9157,1.13);">MON</span>
<span class="t" style="left:471.20px;top:272.90px;font-size:11px;line-height:16px;color:#000;transform:scale(0.9400,1.13);">Adibel sprl</span>
<span class="t" style="left:613.53px;top:272.90px;font-size:11px;line-height:16px;color:#800080;transform:scale(0.9800,1.13);">132.38</span>
<span class="t" style="left:677.01px;top:272.90px;font-size:11px;line-height:16px;color:#c000c0;transform:scale(0.9800,1.13);">1</span>
<div style="left:128px;top:290px;width:558px;height:16px;background:#0a246a;outline:1px dotted #f0e8a0;outline-offset:-1px;"></div>
<span class="t" style="left:140.22px;top:288.90px;font-size:11px;line-height:16px;color:#fff;transform:scale(0.9800,1.13);">1196</span>
<span class="t" style="left:170.80px;top:288.90px;font-size:11px;line-height:16px;color:#fff;transform:scale(0.9750,1.13);">A.Manoukian</span>
<span class="t" style="left:282.70px;top:288.90px;font-size:11px;line-height:16px;color:#fff;transform:scale(0.9620,1.13);">200 061 51-18</span>
<span class="t" style="left:439.50px;top:288.90px;font-size:11px;line-height:16px;color:#fff;transform:scale(0.9157,1.13);">MON</span>
<span class="t" style="left:471.20px;top:288.90px;font-size:11px;line-height:16px;color:#fff;transform:scale(0.9400,1.13);">Adibel sprl</span>
<span class="t" style="left:613.53px;top:288.90px;font-size:11px;line-height:16px;color:#fff;transform:scale(0.9800,1.13);">132.38</span>
<span class="t" style="left:677.01px;top:288.90px;font-size:11px;line-height:16px;color:#fff;transform:scale(0.9800,1.13);">1</span>
<div class="yel" style="left:128px;top:306px;width:558px;height:16px;"></div>
<span class="t" style="left:140.22px;top:304.90px;font-size:11px;line-height:16px;color:#ff0000;transform:scale(0.9800,1.13);">1179</span>
<span class="t" style="left:170.80px;top:304.90px;font-size:11px;line-height:16px;color:#0000ff;transform:scale(0.9750,1.13);">A.Manoukian</span>
<span class="t" style="left:282.70px;top:304.90px;font-size:11px;line-height:16px;color:#008000;transform:scale(0.9620,1.13);">200 071 51-18</span>
<span class="t" style="left:439.50px;top:304.90px;font-size:11px;line-height:16px;color:#ff0000;transform:scale(0.9157,1.13);">MON</span>
<span class="t" style="left:471.20px;top:304.90px;font-size:11px;line-height:16px;color:#000;transform:scale(0.9400,1.13);">Adibel sprl</span>
<span class="t" style="left:613.53px;top:304.90px;font-size:11px;line-height:16px;color:#800080;transform:scale(0.9800,1.13);">132.38</span>
<span class="t" style="left:677.01px;top:304.90px;font-size:11px;line-height:16px;color:#c000c0;transform:scale(0.9800,1.13);">0</span>
<div style="left:128px;top:322px;width:558px;height:16px;background:#fff;"></div>
<span class="t" style="left:145.42px;top:320.90px;font-size:11px;line-height:16px;color:#ff0000;transform:scale(0.9800,1.13);">980</span>
<span class="t" style="left:170.80px;top:320.90px;font-size:11px;line-height:16px;color:#0000ff;transform:scale(0.9750,1.13);">A.Manoukian</span>
<span class="t" style="left:282.70px;top:320.90px;font-size:11px;line-height:16px;color:#008000;transform:scale(0.9620,1.13);">200 101 51-18</span>
<span class="t" style="left:439.50px;top:320.90px;font-size:11px;line-height:16px;color:#ff0000;transform:scale(0.9157,1.13);">MON</span>
<span class="t" style="left:471.20px;top:320.90px;font-size:11px;line-height:16px;color:#000;transform:scale(0.9400,1.13);">Adibel sprl</span>
<span class="t" style="left:613.53px;top:320.90px;font-size:11px;line-height:16px;color:#800080;transform:scale(0.9800,1.13);">132.38</span>
<span class="t" style="left:677.01px;top:320.90px;font-size:11px;line-height:16px;color:#c000c0;transform:scale(0.9800,1.13);">1</span>
<div class="yel" style="left:128px;top:338px;width:558px;height:16px;"></div>
<span class="t" style="left:139.42px;top:336.90px;font-size:11px;line-height:16px;color:#ff0000;transform:scale(0.9800,1.13);">1403</span>
<span class="t" style="left:170.80px;top:336.90px;font-size:11px;line-height:16px;color:#0000ff;transform:scale(0.9750,1.13);">A.Manoukian</span>
<span class="t" style="left:282.70px;top:336.90px;font-size:11px;line-height:16px;color:#008000;transform:scale(0.9620,1.13);">200 102B 51-18</span>
<span class="t" style="left:439.50px;top:336.90px;font-size:11px;line-height:16px;color:#ff0000;transform:scale(0.9157,1.13);">MON</span>
<span class="t" style="left:471.20px;top:336.90px;font-size:11px;line-height:16px;color:#000;transform:scale(0.9400,1.13);">Adibel sprl</span>
<span class="t" style="left:613.53px;top:336.90px;font-size:11px;line-height:16px;color:#800080;transform:scale(0.9800,1.13);">132.38</span>
<span class="t" style="left:677.01px;top:336.90px;font-size:11px;line-height:16px;color:#c000c0;transform:scale(0.9800,1.13);">1</span>
<div style="left:128px;top:354px;width:558px;height:16px;background:#fff;"></div>
<span class="t" style="left:139.42px;top:352.90px;font-size:11px;line-height:16px;color:#ff0000;transform:scale(0.9800,1.13);">1212</span>
<span class="t" style="left:170.80px;top:352.90px;font-size:11px;line-height:16px;color:#0000ff;transform:scale(0.9750,1.13);">A.Manoukian</span>
<span class="t" style="left:282.70px;top:352.90px;font-size:11px;line-height:16px;color:#008000;transform:scale(0.9450,1.13);">Marina 027 54-18</span>
<span class="t" style="left:439.50px;top:352.90px;font-size:11px;line-height:16px;color:#ff0000;transform:scale(0.9157,1.13);">MON</span>
<span class="t" style="left:471.20px;top:352.90px;font-size:11px;line-height:16px;color:#000;transform:scale(0.9400,1.13);">Adibel sprl</span>
<span class="t" style="left:613.53px;top:352.90px;font-size:11px;line-height:16px;color:#800080;transform:scale(0.9800,1.13);">123.82</span>
<span class="t" style="left:677.01px;top:352.90px;font-size:11px;line-height:16px;color:#c000c0;transform:scale(0.9800,1.13);">0</span>
<div class="yel" style="left:128px;top:370px;width:558px;height:16px;"></div>
<span class="t" style="left:139.42px;top:368.90px;font-size:11px;line-height:16px;color:#ff0000;transform:scale(0.9800,1.13);">1312</span>
<span class="t" style="left:170.80px;top:368.90px;font-size:11px;line-height:16px;color:#0000ff;transform:scale(0.9750,1.13);">A.Manoukian</span>
<span class="t" style="left:282.70px;top:368.90px;font-size:11px;line-height:16px;color:#008000;transform:scale(0.9540,1.13);">Sonia 956 57-15</span>
<span class="t" style="left:439.50px;top:368.90px;font-size:11px;line-height:16px;color:#ff0000;transform:scale(0.9157,1.13);">MON</span>
<span class="t" style="left:471.20px;top:368.90px;font-size:11px;line-height:16px;color:#000;transform:scale(0.9400,1.13);">Adibel sprl</span>
<span class="t" style="left:614.33px;top:368.90px;font-size:11px;line-height:16px;color:#800080;transform:scale(0.9800,1.13);">114.28</span>
<span class="t" style="left:677.01px;top:368.90px;font-size:11px;line-height:16px;color:#c000c0;transform:scale(0.9800,1.13);">1</span>
<div style="left:128px;top:386px;width:558px;height:16px;background:#fff;"></div>
<span class="t" style="left:145.42px;top:384.90px;font-size:11px;line-height:16px;color:#ff0000;transform:scale(0.9800,1.13);">969</span>
<span class="t" style="left:170.80px;top:384.90px;font-size:11px;line-height:16px;color:#0000ff;transform:scale(0.9650,1.13);">A.Mikli</span>
<span class="t" style="left:282.70px;top:384.90px;font-size:11px;line-height:16px;color:#008000;transform:scale(0.9450,1.13);">139 770</span>
<span class="t" style="left:439.50px;top:384.90px;font-size:11px;line-height:16px;color:#ff0000;transform:scale(0.9157,1.13);">MON</span>
<span class="t" style="left:471.20px;top:384.90px;font-size:11px;line-height:16px;color:#000;transform:scale(0.9400,1.13);">C.I.L. sprl</span>
<span class="t" style="left:613.53px;top:384.90px;font-size:11px;line-height:16px;color:#800080;transform:scale(0.9800,1.13);">183.69</span>
<span class="t" style="left:677.01px;top:384.90px;font-size:11px;line-height:16px;color:#c000c0;transform:scale(0.9800,1.13);">1</span>
<div class="yel" style="left:128px;top:402px;width:558px;height:16px;"></div>
<span class="t" style="left:139.42px;top:400.90px;font-size:11px;line-height:16px;color:#ff0000;transform:scale(0.9800,1.13);">1420</span>
<span class="t" style="left:170.80px;top:400.90px;font-size:11px;line-height:16px;color:#0000ff;transform:scale(0.9650,1.13);">A.Mikli</span>
<span class="t" style="left:282.70px;top:400.90px;font-size:11px;line-height:16px;color:#008000;transform:scale(0.9450,1.13);">148 888</span>
<span class="t" style="left:439.50px;top:400.90px;font-size:11px;line-height:16px;color:#ff0000;transform:scale(0.9157,1.13);">MON</span>
<span class="t" style="left:471.20px;top:400.90px;font-size:11px;line-height:16px;color:#000;transform:scale(0.9400,1.13);">C.I.L. sprl</span>
<span class="t" style="left:614.33px;top:400.90px;font-size:11px;line-height:16px;color:#800080;transform:scale(0.9800,1.13);">118.99</span>
<span class="t" style="left:677.01px;top:400.90px;font-size:11px;line-height:16px;color:#c000c0;transform:scale(0.9800,1.13);">1</span>
<div class="dither" style="left:686px;top:208px;width:14px;height:210px;"></div>
<div style="left:686px;top:208px;width:14px;height:17px;background:#d4d0c8;box-shadow:inset -1px -1px #404040,inset 1px 1px #fff,inset -2px -2px #808080,inset 2px 2px #d4d0c8;"></div>
<div style="left:693px;top:215px;width:1px;height:1px;background:#000;"></div>
<div style="left:692px;top:216px;width:3px;height:1px;background:#000;"></div>
<div style="left:691px;top:217px;width:5px;height:1px;background:#000;"></div>
<div style="left:686px;top:225px;width:14px;height:15px;background:#d4d0c8;box-shadow:inset -1px -1px #404040,inset 1px 1px #fff,inset -2px -2px #808080,inset 2px 2px #d4d0c8;"></div>
<div style="left:686px;top:402px;width:14px;height:16px;background:#d4d0c8;box-shadow:inset -1px -1px #404040,inset 1px 1px #fff,inset -2px -2px #808080,inset 2px 2px #d4d0c8;"></div>
<div style="left:691px;top:409px;width:5px;height:1px;background:#000;"></div>
<div style="left:692px;top:410px;width:3px;height:1px;background:#000;"></div>
<div style="left:693px;top:411px;width:1px;height:1px;background:#000;"></div>
<span class="t" style="left:127.00px;top:424.90px;font-size:11px;line-height:16px;color:#000;font-weight:bold;transform:scale(1.0608,1.13);">Sélection :</span>
<div style="left:194px;top:426px;width:444px;height:15px;background:#fff;"></div>
<span class="t" style="left:194.50px;top:424.40px;font-size:11px;line-height:16px;color:#000;transform:scale(0.9804,1.13);">A.Manoukian 200 061 51-18</span>
<div style="left:642px;top:426px;width:62px;height:15px;background:#fff;"></div>
<span class="t" style="left:666.00px;top:424.40px;font-size:11px;line-height:16px;color:#000;font-weight:bold;transform:scale(1.0998,1.13);">132.38</span>
<div style="left:126px;top:460px;width:12px;height:19px;background:#ff8080;box-shadow:inset -1px -1px #fff,inset 1px 1px #808080,inset -2px -2px #d4d0c8,inset 2px 2px #404040;"></div>
<div style="left:142px;top:463px;width:13px;height:13px;background:#fff;box-shadow:inset -1px -1px #fff,inset 1px 1px #808080,inset -2px -2px #d4d0c8,inset 2px 2px #404040;"></div>
<span class="t" style="left:160.00px;top:460.80px;font-size:11px;line-height:16px;color:#000;transform:scale(0.9254,1.13);"><u>C</u>ommander</span>
<div style="left:532px;top:458px;width:85px;height:23px;background:#d4d0c8;border:1px solid #000;box-shadow:inset -1px -1px #404040,inset 1px 1px #fff,inset -2px -2px #808080;"></div>
<span class="t" style="left:545.00px;top:461.00px;font-size:11px;line-height:16px;color:#000;transform:scale(0.9649,1.13);"><u>S</u>électionner</span>
<div style="left:620px;top:458px;width:83px;height:23px;background:#d4d0c8;box-shadow:inset -1px -1px #404040,inset 1px 1px #fff,inset -2px -2px #808080,inset 2px 2px #d4d0c8;"></div>
<span class="t" style="left:643.00px;top:461.00px;font-size:11px;line-height:16px;color:#000;transform:scale(0.9496,1.13);"><u>A</u>nnuler</span>
</body></html>
